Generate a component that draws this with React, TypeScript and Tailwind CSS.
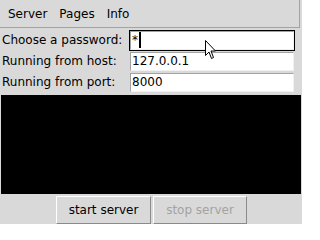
import React from 'react';

const rows = [
  { label: 'Choose a password:', value: '*', focused: true },
  { label: 'Running from host:', value: '127.0.0.1', focused: false },
  { label: 'Running from port:', value: '8000', focused: false },
];

function Entry({ value, focused }: { value: string; focused: boolean }) {
  return (
    <div className={`h-[21px] w-[166px] border ${focused ? 'border-black' : 'border-[#d9d9d9]'}`}>
      <div className="h-full border border-t-[#a3a3a3] border-l-[#a3a3a3] border-r-[#f0f0f0] border-b-[#f0f0f0] bg-white flex items-center pl-[1px]">
        <span className="leading-[14px]">{value}</span>
        {focused && <span className="ml-[1px] w-[2px] h-[16px] bg-black" />}
      </div>
    </div>
  );
}

export default function App() {
  return (
    <div className="relative w-[302px] h-[224px] overflow-hidden bg-[#d9d9d9] text-black text-[12px] font-['DejaVu_Sans',sans-serif] flex flex-col">
      {/* Menu bar */}
      <div className="h-[28px] w-[300px] border-b border-r border-[#a3a3a3] flex pl-[2px] pt-[7px]">
        {['Server', 'Pages', 'Info'].map((m) => (
          <span key={m} className="px-[6px] leading-[14px]">{m}</span>
        ))}
      </div>

      {/* Form */}
      <div className="pt-[2px] flex flex-col">
        {rows.map((r) => (
          <div key={r.label} className="h-[21px] flex items-center">
            <span className="w-[129px] pl-[2px] leading-[14px]">{r.label}</span>
            <Entry value={r.value} focused={r.focused} />
          </div>
        ))}
      </div>

      {/* Canvas */}
      <div className="mt-[1px] h-[102px] border border-[#d9d9d9] bg-black" />

      {/* Buttons */}
      <div className="mt-[1px] flex pl-[56px] gap-[2px]">
        <button className="w-[95px] h-[28px] border border-t-white border-l-white border-r-[#8a8a8a] border-b-[#8a8a8a] bg-[#d9d9d9] leading-[14px]">
          start server
        </button>
        <button disabled className="w-[94px] h-[28px] border border-t-white border-l-white border-r-[#8a8a8a] border-b-[#8a8a8a] bg-[#d9d9d9] text-[#a3a3a3] leading-[14px]">
          stop server
        </button>
      </div>

      {/* Mouse pointer */}
      <svg className="absolute left-[204px] top-[40px]" width="13" height="20" viewBox="0 0 13 20">
        <path d="M1.5 0.5 L1.5 15.5 L5 12 L7.5 18.5 L9.5 17.5 L7 11 L11.5 11 Z" fill="white" stroke="black" strokeWidth="1" strokeLinejoin="miter" />
      </svg>
    </div>
  );
}
